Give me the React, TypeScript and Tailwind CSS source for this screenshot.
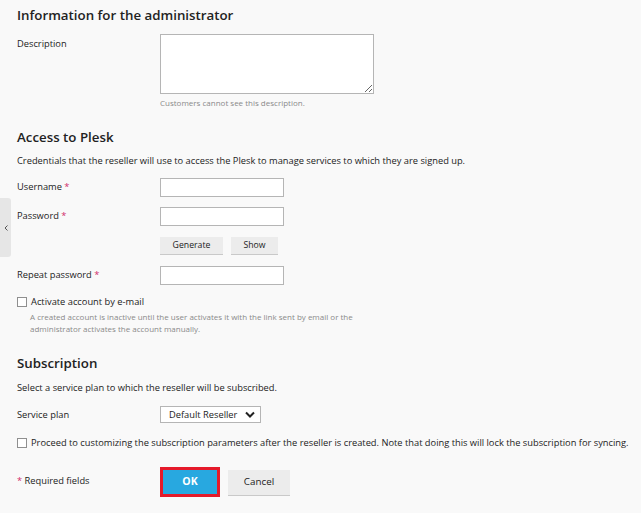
import React from 'react';

const font = { fontFamily: '"Open Sans", "Liberation Sans", sans-serif' };

const Req = () => <span className="text-[#d02d6b]"> *</span>;

const TextInput: React.FC = () => (
  <input
    type="text"
    className="block h-[19px] w-[124px] border border-[#b5b5b5] bg-white px-1 text-[9px] outline-none"
  />
);

const GrayButton: React.FC<{ label: string; className?: string }> = ({ label, className }) => (
  <button
    type="button"
    className={`flex items-center justify-center bg-[#ececec] text-[#222] shadow-[0_1px_0_#c9c9c9] ${className ?? ''}`}
  >
    {label}
  </button>
);

const Checkbox = () => <span className="block h-[10px] w-[10px] shrink-0 border border-[#8f8f8f] bg-white" />;

export default function App() {
  return (
    <div
      className="relative h-[513px] w-[641px] overflow-hidden bg-[#f9f9f9] pl-[17px] text-[9.3px] text-[#222]"
      style={font}
    >
      {/* collapsed side panel tab */}
      <div className="absolute left-0 top-[198px] flex h-[59px] w-[11px] items-center justify-center rounded-r-[3px] bg-[#e6e6e6]">
        <svg width="4" height="6" viewBox="0 0 4 6" fill="none">
          <path d="M3.5 0.5 L1 3 L3.5 5.5" stroke="#555" strokeWidth="1" />
        </svg>
      </div>

      {/* Information for the administrator */}
      <h2 className="pt-[5px] text-[13.3px] font-semibold leading-[20px] text-[#222]">
        Information for the administrator
      </h2>
      <div className="mt-[9px] flex">
        <div className="w-[143px] pt-[3px] leading-[13px]">Description</div>
        <div>
          <textarea className="block h-[60px] w-[214px] resize-y border border-[#b5b5b5] bg-white outline-none" />
          <div className="mt-[3px] text-[8px] leading-[12px] text-[#8a8a8a]">
            Customers cannot see this description.
          </div>
        </div>
      </div>

      {/* Access to Plesk */}
      <h2 className="mt-[18px] text-[13.3px] font-semibold leading-[20px]">Access to Plesk</h2>
      <p className="mt-[7px] leading-[14px]">
        Credentials that the reseller will use to access the Plesk to manage services to which they are
        signed up.
      </p>
      <div className="mt-[10px] flex items-start">
        <div className="w-[143px] pt-[2px] leading-[14px]">
          Username
          <Req />
        </div>
        <TextInput />
      </div>
      <div className="mt-[10px] flex items-start">
        <div className="w-[143px] pt-[2px] leading-[14px]">
          Password
          <Req />
        </div>
        <TextInput />
      </div>
      <div className="mt-[11px] flex gap-[8px] pl-[143px] text-[8.7px]">
        <GrayButton label="Generate" className="h-[17px] w-[63px]" />
        <GrayButton label="Show" className="h-[17px] w-[47px]" />
      </div>
      <div className="mt-[12px] flex items-start">
        <div className="w-[143px] pt-[2px] leading-[14px]">
          Repeat password
          <Req />
        </div>
        <TextInput />
      </div>
      <label className="mt-[10px] flex items-center gap-[4px] leading-[14px]">
        <Checkbox />
        Activate account by e-mail
      </label>
      <p className="mt-[2px] w-[345px] pl-[13px] text-[8px] leading-[12px] text-[#8a8a8a]">
        A created account is inactive until the user activates it with the link sent by email or the
        administrator activates the account manually.
      </p>

      {/* Subscription */}
      <h2 className="mt-[18px] text-[13.3px] font-semibold leading-[20px]">Subscription</h2>
      <p className="mt-[8px] leading-[14px]">Select a service plan to which the reseller will be subscribed.</p>
      <div className="mt-[11px] flex items-center">
        <div className="w-[143px] leading-[14px]">Service plan</div>
        <div className="flex h-[17px] w-[101px] items-center justify-between border border-[#b5b5b5] bg-white pl-[8px] pr-[5px]">
          <span>Default Reseller</span>
          <svg width="10" height="7" viewBox="0 0 10 7" fill="none">
            <path d="M1 1.5 L5 5.5 L9 1.5" stroke="#222" strokeWidth="2" />
          </svg>
        </div>
      </div>
      <label className="mt-[13px] flex items-center gap-[4px] whitespace-nowrap leading-[14px]">
        <Checkbox />
        Proceed to customizing the subscription parameters after the reseller is created. Note that doing
        this will lock the subscription for syncing.
      </label>

      {/* Footer */}
      <div className="mt-[17px] flex items-start">
        <div className="w-[143px] pt-[7px] leading-[14px]">
          <span className="text-[#d02d6b]">* </span>Required fields
        </div>
        <div className="flex items-start gap-[8px]">
          <div className="border-[3px] border-[#e51a2a]">
            <button
              type="button"
              className="flex h-[24px] w-[54px] items-center justify-center bg-[#28a8e0] text-[10.5px] font-bold text-white"
            >
              OK
            </button>
          </div>
          <GrayButton label="Cancel" className="mt-[3px] h-[25px] w-[62px] text-[9.8px]" />
        </div>
      </div>
    </div>
  );
}
